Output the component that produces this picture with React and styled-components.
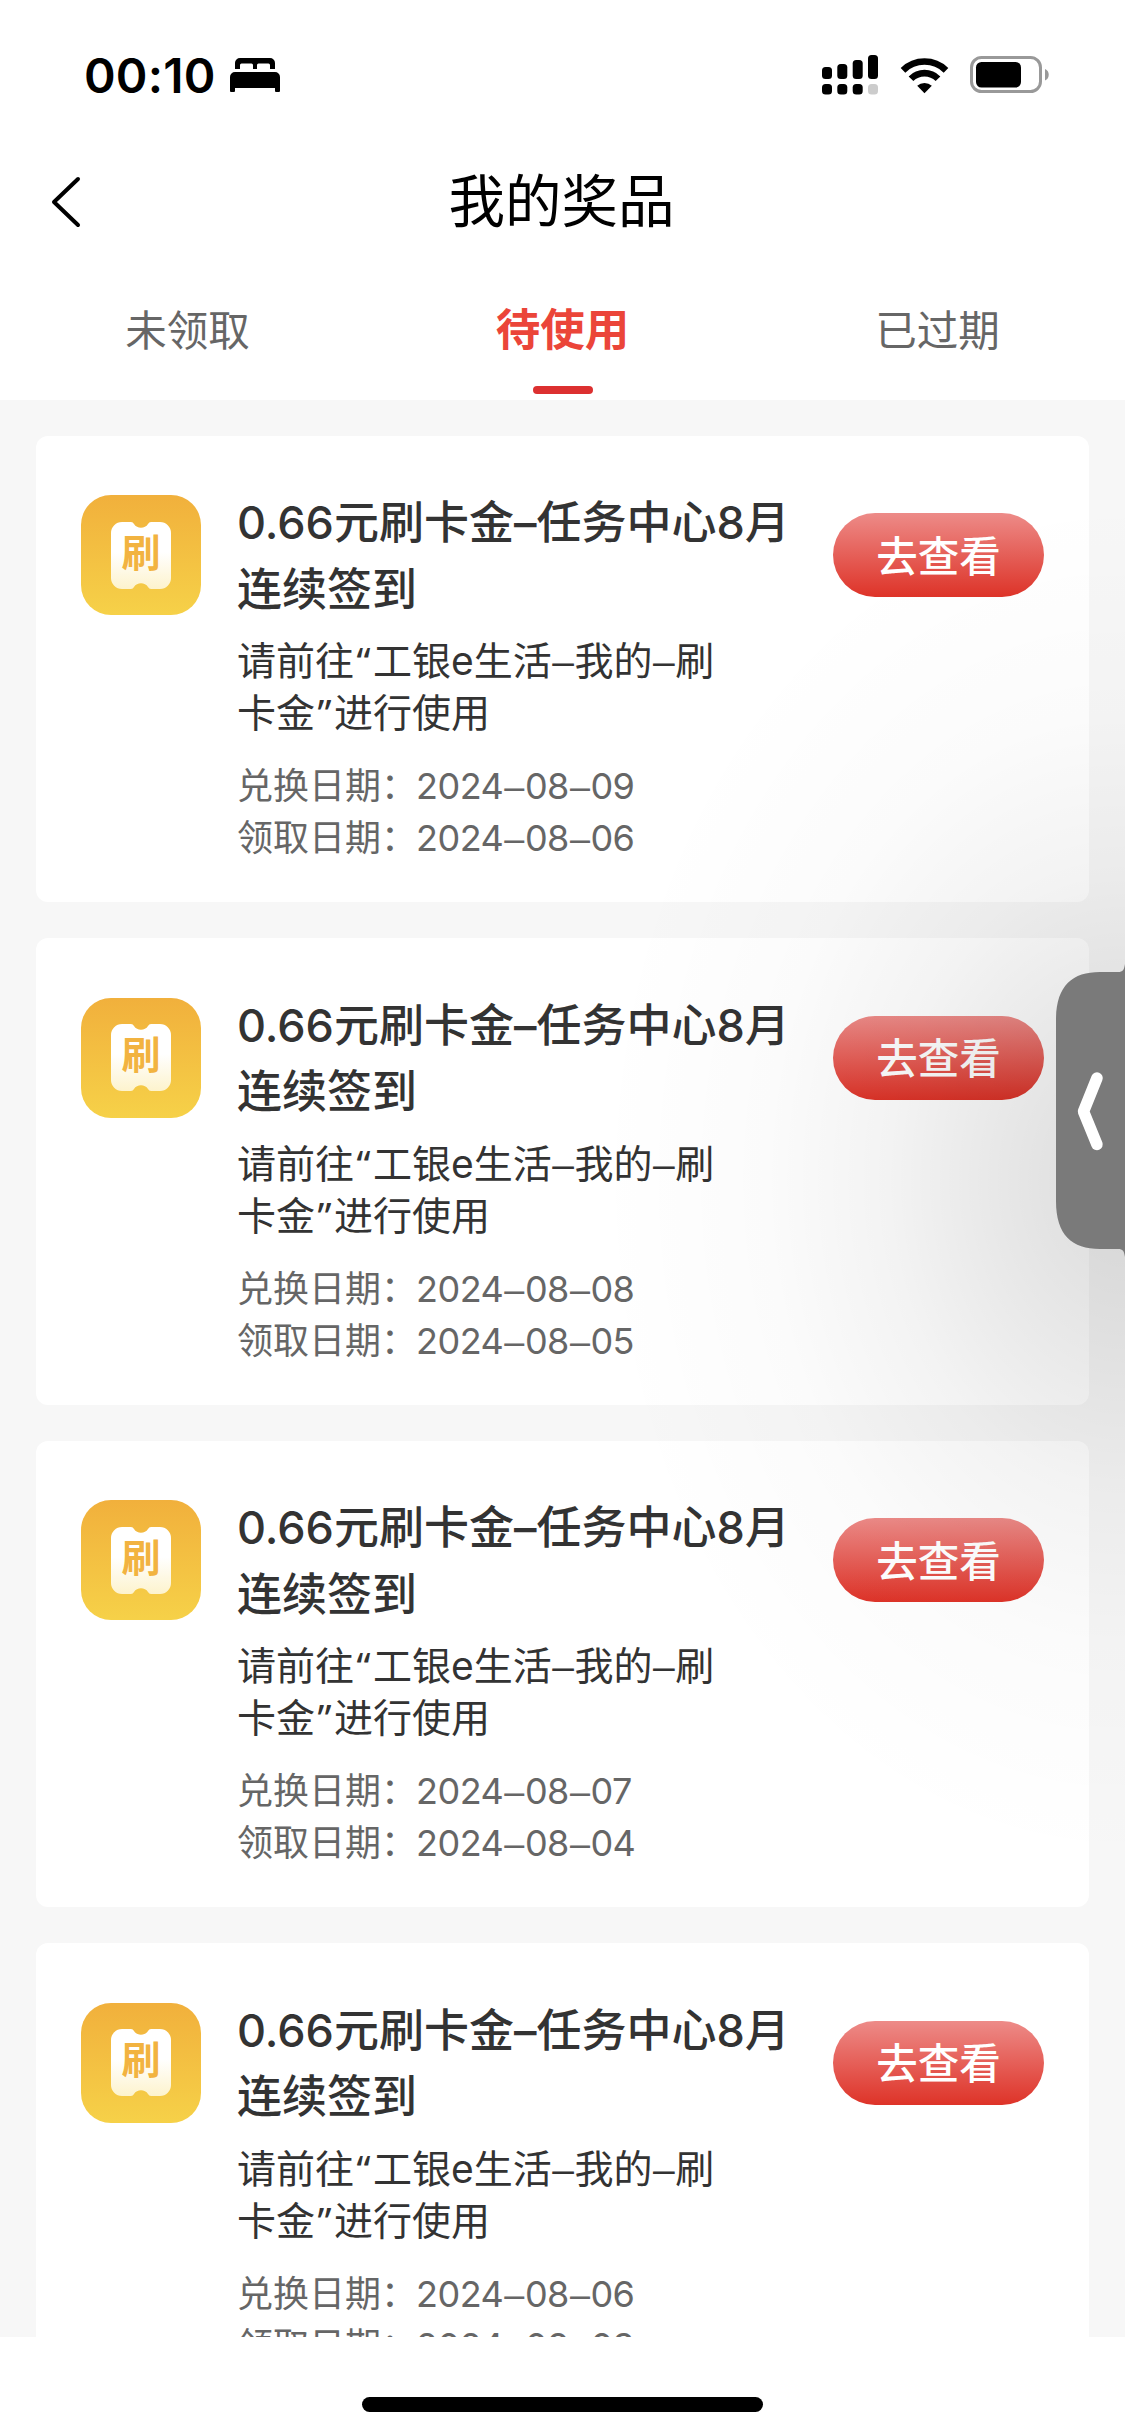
import React from "react";
import styled, { createGlobalStyle } from "styled-components";

const prizes = [
  { id: 1, exchanged: ["2024", "08", "09"], received: ["2024", "08", "06"] },
  { id: 2, exchanged: ["2024", "08", "08"], received: ["2024", "08", "05"] },
  { id: 3, exchanged: ["2024", "08", "07"], received: ["2024", "08", "04"] },
  { id: 4, exchanged: ["2024", "08", "06"], received: ["2024", "08", "03"] },
];

const tabs = ["未领取", "待使用", "已过期"];

const BedIcon = () => (
  <svg width="50" height="36" viewBox="0 0 50 36">
    <path d="M5 12V6a5 5 0 0 1 5-5h30a5 5 0 0 1 5 5v6h-5V8a1.500 1.500 0 0 0-1.500-1.500h-10A1.500 1.500 0 0 0 27 8v4h-4V8a1.500 1.500 0 0 0-1.500-1.500h-10A1.500 1.500 0 0 0 10 8v4z" />
    <path d="M0 20a5 5 0 0 1 5-5h40a5 5 0 0 1 5 5v14a1 1 0 0 1-1 1h-3a1 1 0 0 1-1-1v-3H5v3a1 1 0 0 1-1 1H1a1 1 0 0 1-1-1z" />
  </svg>
);

const SignalIcon = () => (
  <svg width="57" height="40" viewBox="0 0 57 40">
    <rect x="0" y="12" width="10" height="12" rx="3.500" />
    <rect x="15.300" y="9" width="10" height="15" rx="3.500" />
    <rect x="30.700" y="5" width="10" height="19" rx="3.500" />
    <rect x="46" y="0" width="10" height="24" rx="3.500" />
    <rect x="0" y="29" width="10" height="10.500" rx="3.500" />
    <rect x="15.300" y="29" width="10" height="10.500" rx="3.500" />
    <rect x="30.700" y="29" width="10" height="10.500" rx="3.500" />
    <rect x="46" y="29" width="10" height="10.500" rx="3.500" fill="#ccc" />
  </svg>
);

const WifiIcon = () => (
  <svg width="49" height="37" viewBox="0 0 49 37">
    <g fill="none" stroke="#000" strokeWidth="6.600">
      <path d="M3 13.300a30.800 30.800 0 0 1 43 0" />
      <path d="M11 21.800a19 19 0 0 1 27 0" />
    </g>
    <path d="M24.500 36.200l-7.300-7.400a10.600 10.600 0 0 1 14.600 0z" />
  </svg>
);

const BatteryIcon = () => (
  <svg width="80" height="38" viewBox="0 0 80 38">
    <rect x="1.500" y="1.500" width="69" height="34" rx="10" fill="none" stroke="#999" strokeWidth="3" />
    <rect x="6" y="6" width="45" height="25.500" rx="5.500" />
    <path d="M75 13c5 2 5 9.500 0 11.500z" fill="#999" />
  </svg>
);

const DateRow = ({ label, parts }) => (
  <DateLine>
    {label}：
    <DateValue>
      {parts[0]}
      <Dash $space={1}>–</Dash>
      {parts[1]}
      <Dash $space={1}>–</Dash>
      {parts[2]}
    </DateValue>
  </DateLine>
);

const PrizeCard = ({ prize }) => (
  <Card>
    <Badge>
      <Ticket viewBox="0 0 60 67">
        <defs>
          <linearGradient id="ticket" x1="0" y1="0" x2="0" y2="1">
            <stop offset="0.450" stopColor="#fff" />
            <stop offset="1" stopColor="#fdf3cd" />
          </linearGradient>
        </defs>
        <path
          d="M11 0h9q2 0 3 2c3 5 11 5 14 0q1-2 3-2h9a11 11 0 0 1 11 11v45a11 11 0 0 1-11 11h-9q-2 0-3-2c-3-5-11-5-14 0q-1 2-3 2h-9a11 11 0 0 1-11-11V11A11 11 0 0 1 11 0z"
          fill="url(#ticket)"
        />
      </Ticket>
      <BadgeText>刷</BadgeText>
    </Badge>
    <Info>
      <Name>
        0.66元刷卡金–任务中心8月
        <br />
        连续签到
      </Name>
      <Hint>
        请前往<Quote>“</Quote>工银e生活<Dash>–</Dash>我的<Dash>–</Dash>刷
        <br />
        卡金<Quote>”</Quote>进行使用
      </Hint>
      <DateRow label="兑换日期" parts={prize.exchanged} />
      <DateRow label="领取日期" parts={prize.received} />
    </Info>
    <ViewBtn>去查看</ViewBtn>
  </Card>
);

const App = () => {
  return (
    <Screen>
      <GlobalStyle />
      <StatusBar>
        <Clock>00:10</Clock>
        <BedIcon />
        <StatusIcons>
          <SignalIcon />
          <WifiIcon />
          <BatteryIcon />
        </StatusIcons>
      </StatusBar>
      <Header>
        <BackBtn aria-label="back">
          <svg width="32" height="54" viewBox="0 0 32 54" fill="none" stroke="#000" strokeWidth="4" strokeLinecap="round" strokeLinejoin="round">
            <path d="M28 4L4 27l24 23" />
          </svg>
        </BackBtn>
        <Title>我的奖品</Title>
      </Header>
      <Tabs>
        {tabs.map((tab) => (
          <Tab key={tab} $active={tab === "待使用"}>
            {tab}
          </Tab>
        ))}
      </Tabs>
      <List>
        {prizes.map((prize) => (
          <PrizeCard key={prize.id} prize={prize} />
        ))}
      </List>
      <HomeArea>
        <HomeBar />
      </HomeArea>
      <SideShadow />
      <SideHandle viewBox="0 0 69 293">
        <path
          d="M69 0c-1 6-2 8-7 8H44C16 8 0 22 0 56v181c0 34 16 48 44 48h18c5 0 6 2 7 8z"
          fill="#7a7a7a"
        />
        <path
          d="M41 114L27.500 147.500L41 180.500"
          fill="none"
          stroke="#fff"
          strokeWidth="11.500"
          strokeLinecap="round"
          strokeLinejoin="round"
        />
      </SideHandle>
    </Screen>
  );
};

export default App;

// ---------- Styled Components ----------
const GlobalStyle = createGlobalStyle`
  body {
    margin: 0;
    background: #fff;
  }
`;

const Screen = styled.div`
  position: relative;
  display: flex;
  flex-direction: column;
  width: 1125px;
  height: 2435px;
  overflow: hidden;
  background: #fff;
  font-family: Inter, "Noto Sans CJK SC", sans-serif;
`;

const StatusBar = styled.div`
  display: flex;
  align-items: center;
  flex: none;
  height: 150px;
  padding: 0 75px 0 84px;
  box-sizing: border-box;
`;

const Clock = styled.div`
  width: 146px;
  font-size: 48px;
  font-weight: 600;
  letter-spacing: 0.200px;
`;

const StatusIcons = styled.div`
  display: flex;
  align-items: center;
  gap: 21px;
  margin-left: auto;
`;

const Header = styled.div`
  display: grid;
  grid-template-columns: 150px 1fr 150px;
  align-items: center;
  flex: none;
  height: 104px;
`;

const BackBtn = styled.button`
  display: flex;
  padding: 0 0 0 50px;
  border: none;
  background: none;
  cursor: pointer;
`;

const Title = styled.div`
  font-size: 56.500px;
  line-height: 80px;
  margin-left: -2px;
  text-align: center;
  color: #000;
`;

const Tabs = styled.div`
  display: grid;
  grid-template-columns: repeat(3, 1fr);
  flex: none;
  height: 146px;
`;

const Tab = styled.div`
  display: flex;
  flex-direction: column;
  align-items: center;
  padding-top: ${({ $active }) => ($active ? 44 : 45)}px;
  font-size: ${({ $active }) => ($active ? "44.5px" : "41.500px")};
  line-height: 64px;
  font-weight: ${({ $active }) => ($active ? 700 : 400)};
  color: ${({ $active }) => ($active ? "#eb4539" : "#666")};

  &::after {
    content: "";
    width: 60px;
    height: 8px;
    margin-top: 24px;
    border-radius: 4px;
    background: ${({ $active }) => ($active ? "#dc3030" : "transparent")};
  }
`;

const List = styled.div`
  display: flex;
  flex-direction: column;
  gap: 36px;
  flex: none;
  height: 1937px;
  padding: 35.500px 36px 0;
  box-sizing: border-box;
  overflow: hidden;
  background: #f7f7f7;
`;

const Card = styled.div`
  display: flex;
  align-items: flex-start;
  flex: none;
  height: 466.500px;
  padding: 59.500px 45px 0;
  box-sizing: border-box;
  border-radius: 12px;
  background: #fff;
`;

const Badge = styled.div`
  display: grid;
  place-items: center;
  flex: none;
  width: 120px;
  height: 120px;
  border-radius: 30px;
  background: linear-gradient(#f1b03c, #f6d148);

  & > * {
    grid-area: 1 / 1;
  }
`;

const Ticket = styled.svg`
  width: 60px;
  height: 67px;
`;

const BadgeText = styled.span`
  font-size: 39px;
  line-height: 50px;
  font-weight: 700;
  color: #f2b340;
  padding-bottom: 5px;
`;

const Info = styled.div`
  flex: 1;
  margin-left: 36px;
  white-space: nowrap;
`;

const Name = styled.div`
  margin-top: -5px;
  font-size: 45px;
  line-height: 66.500px;
  font-weight: 500;
  color: #333;
`;

const Hint = styled.div`
  margin-top: 12px;
  font-size: 39px;
  line-height: 52px;
  color: #333;
`;

const Quote = styled.span`
  padding: 0 2.500px;
  font-family: "Noto Sans", sans-serif;
  line-height: 1;
`;

const Dash = styled.span`
  margin: 0 ${({ $space }) => $space || 0.5}px;
  font-family: "Liberation Sans", sans-serif;
  line-height: 1;
`;

const DateLine = styled.div`
  font-size: 36px;
  line-height: 52px;
  color: #666;

  ${Hint} + & {
    margin-top: 21px;
  }
`;

const DateValue = styled.span`
  margin-left: -1px;
  letter-spacing: -0.500px;
`;

const ViewBtn = styled.button`
  flex: none;
  width: 211px;
  height: 84px;
  margin-top: 18px;
  padding: 0 0 3px;
  border: none;
  border-radius: 42px;
  background: linear-gradient(#ed8b88, #de3328);
  color: #fff;
  font-family: inherit;
  font-size: 41.500px;
  font-weight: 500;
  cursor: pointer;
`;

const HomeArea = styled.div`
  display: flex;
  justify-content: center;
  flex: 1;
  padding-top: 60px;
`;

const HomeBar = styled.div`
  width: 401px;
  height: 15px;
  border-radius: 8px;
  background: #000;
`;

const SideShadow = styled.div`
  position: absolute;
  top: 480px;
  right: 0;
  width: 560px;
  height: 1400px;
  pointer-events: none;
  background: radial-gradient(
    ellipse 530px 690px at 100% 50%,
    rgba(0, 0, 0, 0.14),
    rgba(0, 0, 0, 0.09) 25%,
    rgba(0, 0, 0, 0.047) 45%,
    rgba(0, 0, 0, 0.015) 68%,
    transparent
  );
`;

const SideHandle = styled.svg`
  position: absolute;
  top: 964px;
  right: 0;
  width: 69px;
  height: 293px;
`;
